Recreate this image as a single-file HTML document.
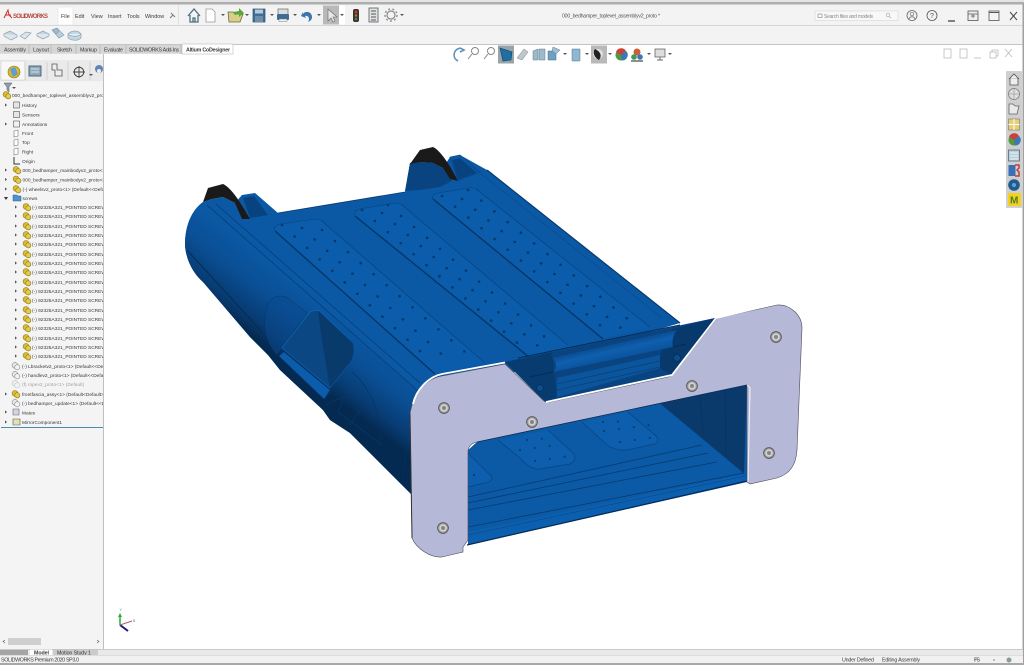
<!DOCTYPE html>
<html lang="en"><head><meta charset="utf-8"><title>SOLIDWORKS</title>
<style>html,body{margin:0;padding:0;background:#fff;overflow:hidden}svg{display:block}text{font-family:"Liberation Sans",sans-serif;fill:#3a3a3a}</style></head>
<body>
<svg width="1024" height="665" viewBox="0 0 1024 665" xmlns="http://www.w3.org/2000/svg">
<defs>
<linearGradient id="side" gradientUnits="userSpaceOnUse" x1="300" y1="285" x2="258" y2="340"><stop offset="0" stop-color="#0b58a3"/><stop offset=".4" stop-color="#0a4f95"/><stop offset=".78" stop-color="#083c73"/><stop offset="1" stop-color="#052a52"/></linearGradient>
<linearGradient id="bar" gradientUnits="userSpaceOnUse" x1="610" y1="340" x2="615" y2="362"><stop offset="0" stop-color="#0a3f78"/><stop offset=".5" stop-color="#0e60b0"/><stop offset="1" stop-color="#0b4f95"/></linearGradient>
<clipPath id="pc"><rect x="0" y="88" width="103" height="340"/></clipPath>
<g id="c"><circle cx="-1" cy="-.6" r="2.9" fill="#dcbc2e" stroke="#8a7a20" stroke-width=".6"/><circle cx="1.3" cy="1.3" r="2.6" fill="#e5cb4a" stroke="#8a7a20" stroke-width=".6"/></g>
<g id="g"><circle cx="-1" cy="-.6" r="2.9" fill="#e8e8e8" stroke="#666" stroke-width=".5"/><circle cx="1.3" cy="1.3" r="2.6" fill="#f3f3f3" stroke="#666" stroke-width=".5"/></g>
<path id="a" d="M-1,-1.6 L1,0 L-1,1.6Z" fill="#555"/>
<g id="s"><circle r="5.400" fill="#9a9a9a" stroke="#4a4a4a" stroke-width=".7"/><circle r="3.800" fill="#d2d2d2"/><circle r="2" fill="#858585"/></g>
<path id="d" d="M0,0 l2,2 l2,-2 z" fill="#555"/>
</defs>

<!-- chrome -->
<rect x="0" y="0" width="1024" height="2" fill="#e4e4e4"/>
<rect x="0" y="2" width="1024" height="2.500" fill="#aeaeae"/>
<rect x="0" y="4.500" width="1024" height="40" fill="#f3f3f3"/>
<rect x="0" y="25" width="1024" height=".8" fill="#d0d0d0"/>
<rect x="0" y="44" width="1024" height=".8" fill="#b5b5b5"/>
<rect x="1022.500" y="4" width="1.500" height="661" fill="#a0a0a0"/>

<!-- logo + menu -->
<path d="M4,18 L8,10 L9,15 L12,18 M5,15 L11,15" fill="none" stroke="#c8322a" stroke-width="1"/>
<text x="13" y="18" font-size="6" font-weight="700" style="fill:#b44a42" textLength="35">SOLIDWORKS</text>
<rect x="58" y="7" width="15" height="18" fill="#fff" stroke="#ddd" stroke-width=".5"/>
<g font-size="5.400"><text x="61" y="18">File</text><text x="75" y="18">Edit</text><text x="91" y="18">View</text><text x="108" y="18">Insert</text><text x="127" y="18">Tools</text><text x="145" y="18">Window</text></g>
<path d="M170,18 L173,15 M171,13 L175,17" stroke="#777" stroke-width="1"/>
<rect x="178" y="5" width=".8" height="20" fill="#ddd"/>

<!-- quick toolbar -->
<path d="M188,16 L194,9 L200,16 M190,15 V22 H198 V15 M193,22 V18 H195 V22" fill="#f5f5f5" stroke="#4c6f7f" stroke-width="1.300"/>
<path d="M206,9 H212 L215,12 V22 H206Z" fill="#fff" stroke="#999" stroke-width=".8"/>
<use href="#d" x="221" y="14"/>
<path d="M228,12 H233 L235,14 H243 L240,22 H229Z" fill="#d9cf8c" stroke="#6b6b3a" stroke-width=".8"/>
<path d="M233,12 L239,11 V8 L244,13 L239,17 V14 L235,15Z" fill="#58a83a"/>
<use href="#d" x="245" y="14"/>
<rect x="253" y="9" width="12" height="13" fill="#3f6f98" stroke="#2c4f70" stroke-width=".7"/><rect x="255" y="9.500" width="8" height="4" fill="#b5cbdc"/><rect x="255" y="16" width="8" height="6" fill="#6d8faa"/>
<use href="#d" x="270" y="14"/>
<rect x="278" y="9" width="10" height="6" fill="#ddd" stroke="#666" stroke-width=".7"/><rect x="277" y="14" width="12" height="6" rx="1" fill="#3b6d96"/><rect x="279" y="19" width="8" height="2.500" fill="#eee" stroke="#666" stroke-width=".4"/>
<use href="#d" x="293" y="14"/>
<path d="M303,14 C306,10 312,12 312,17 C312,20 310,21 308,22 C310,19 309,15 305,16 L306,18 L301,16 L303,12Z" fill="#3d76a8"/>
<use href="#d" x="317" y="14"/>
<rect x="323" y="5.500" width="16" height="19" fill="#b9b9b9"/>
<path d="M328,9 L328,21 L331,18 L333,22 L335,21 L333,17 L337,17Z" fill="#e6e6e6" stroke="#666" stroke-width=".6"/>
<rect x="339" y="5.500" width="6" height="19" fill="#fff"/><use href="#d" x="340" y="14"/>
<rect x="353" y="9" width="6" height="13" rx="2" fill="#333"/><circle cx="356" cy="12" r="1.500" fill="#c33"/><circle cx="356" cy="15.500" r="1.300" fill="#a87a20"/><circle cx="356" cy="19" r="1.300" fill="#4a8a3a"/>
<rect x="369" y="8" width="9" height="14" fill="#dfe5dd" stroke="#556" stroke-width=".8"/><path d="M371,11 H376 M371,14 H376 M371,17 H376 M371,20 H376" stroke="#556" stroke-width=".9"/>
<circle cx="391" cy="15" r="4" fill="none" stroke="#888" stroke-width="1.200"/><circle cx="391" cy="15" r="6" fill="none" stroke="#999" stroke-width="1.600" stroke-dasharray="2 2.200"/>
<use href="#d" x="400" y="14"/>

<!-- title + search + window controls -->
<text x="562" y="17.500" font-size="5.200" textLength="98" style="fill:#555">000_bedhamper_toplevel_assemblyv2_proto *</text>
<rect x="815" y="11" width="83" height="9.500" fill="#f8f8f8" stroke="#d5d5d5" stroke-width=".6"/>
<rect x="818" y="14" width="4" height="3.500" fill="none" stroke="#888" stroke-width=".6"/>
<text x="824" y="17.800" font-size="5" textLength="49" style="fill:#888">Search files and models</text>
<circle cx="888" cy="15" r="1.800" fill="none" stroke="#aaa" stroke-width=".7"/><path d="M889,16.500 L891,18" stroke="#aaa" stroke-width=".7"/>
<circle cx="912" cy="15.500" r="5" fill="none" stroke="#666" stroke-width=".8"/><circle cx="912" cy="14" r="1.800" fill="none" stroke="#666" stroke-width=".7"/><path d="M909,19 C910,16 914,16 915,19" fill="none" stroke="#666" stroke-width=".7"/>
<circle cx="932" cy="15.500" r="5" fill="none" stroke="#555" stroke-width=".8"/><text x="930" y="18" font-size="7" style="fill:#555">?</text>
<path d="M948,21 H955" stroke="#444" stroke-width="1.300"/>
<rect x="968" y="11" width="10" height="9.500" fill="#eee" stroke="#555" stroke-width=".8"/><path d="M968,14 H978 M973,14 V18 M971,16 H975" stroke="#555" stroke-width=".7"/>
<rect x="989" y="11" width="10" height="9.500" fill="none" stroke="#555" stroke-width=".8"/><path d="M989,12.500 H999" stroke="#555" stroke-width="1"/>
<path d="M1010,12 L1017,20 M1017,12 L1010,20" stroke="#444" stroke-width="1"/>

<!-- second row icons -->
<g stroke="#8ba3b5" stroke-width=".7">
<path d="M4,34 L10,31 L17,35 L11,38Z" fill="#c5d5df"/><path d="M4,34 V36 L11,40 L17,37 V35" fill="#dfe6eb"/>
<path d="M20,36 L26,32 L31,33 L25,39Z" fill="#dde4ea"/>
<path d="M37,34 L43,31 L49,34 L43,38Z" fill="#c5d5df"/><path d="M37,34 V36 L43,39 L49,36 V34" fill="#dfe6eb"/>
<path d="M52,30 L57,28 L64,35 L59,38Z" fill="#b5cddc"/><circle cx="56" cy="31" r="2.500" fill="#9dbacd"/>
<path d="M68,34 C72,30 78,30 81,34 V38 C78,41 72,41 68,38Z" fill="#c2d7e3"/><path d="M68,34 C72,37 78,37 81,34" fill="#e9f0f4"/>
</g>

<!-- command tabs -->
<rect x="0" y="44.800" width="182" height="9" fill="#d6d6d6"/>
<rect x="182" y="44" width="51" height="10" fill="#fff" stroke="#bbb" stroke-width=".6"/>
<path d="M29,45 V54 M51,45 V54 M76,45 V54 M100,45 V54 M126,45 V54 M181,45 V54" stroke="#aaa" stroke-width=".6"/>
<g font-size="5.300"><text x="4" y="51.500" textLength="22">Assembly</text><text x="33" y="51.500" textLength="16">Layout</text><text x="57" y="51.500" textLength="15">Sketch</text><text x="80" y="51.500" textLength="17">Markup</text><text x="104" y="51.500" textLength="19">Evaluate</text><text x="129" y="51.500" textLength="50">SOLIDWORKS Add-Ins</text><text x="186" y="51.500" textLength="44" font-weight="700">Altium CoDesigner</text></g>

<!-- left panel -->
<rect x="0" y="54" width="103" height="595" fill="#f4f4f4"/>
<rect x="103" y="54" width=".9" height="595" fill="#b8b8b8"/>
<rect x="0" y="60" width="103" height="20" fill="#eaeaea"/>
<rect x="1" y="61" width="24" height="19" fill="#f8f8f8" stroke="#ccc" stroke-width=".5"/>
<path d="M25,62 V80 M47,62 V80 M68,62 V80 M90,62 V80" stroke="#c4c4c4" stroke-width=".6"/>
<circle cx="14" cy="72" r="6" fill="#dcb52a" stroke="#8a7a20" stroke-width=".6"/><path d="M10,69 L15,67 L18,74 L13,77Z" fill="#5f9ed0"/>
<rect x="29" y="66" width="12" height="10" fill="#8fa9b9" stroke="#3f5f70" stroke-width=".9"/><path d="M31,69 H39 M31,72 H39" stroke="#eef" stroke-width=".8"/>
<path d="M52,64 H57 V70 H62 V76 H55 V70 H52Z" fill="#eee" stroke="#555" stroke-width=".8"/>
<circle cx="79" cy="72" r="4.800" fill="none" stroke="#444" stroke-width="1"/><path d="M73,72 H85 M79,66 V78" stroke="#444" stroke-width=".9"/>
<use href="#d" x="89" y="74"/><circle cx="99" cy="69" r="4" fill="#5f85b5"/><circle cx="99" cy="71" r="2" fill="#eee"/>
<rect x="0" y="80.500" width="103" height=".6" fill="#ddd"/>
<path d="M4,83 H12 L9,87 V92 L7,90 V87Z" fill="#8fa0a8" stroke="#556" stroke-width=".5"/><use href="#d" x="12" y="87"/>

<!-- tree -->
<g clip-path="url(#pc)" font-size="4.800">
<use href="#c" x="7" y="95"/><text x="12" y="97">000_bedhamper_toplevel_assemblyv2_proto</text>
<use href="#a" x="6" y="105"/><rect x="13.500" y="102" width="6" height="6" fill="#e6e6e6" stroke="#555" stroke-width=".6"/><text x="22" y="107">History</text>
<rect x="13.500" y="111.500" width="6" height="6" fill="#e6e6e6" stroke="#555" stroke-width=".6"/><text x="22" y="116.500">Sensors</text>
<use href="#a" x="6" y="124"/><rect x="13.500" y="121" width="6" height="6" fill="#f2f2f2" stroke="#555" stroke-width=".6"/><text x="22" y="126">Annotations</text>
<path d="M14,131 L18,130 V136 L14,137Z M14,140 L18,139 V145 L14,146Z M14,149 L18,148 V154 L14,155Z" fill="#fff" stroke="#777" stroke-width=".6"/>
<text x="22" y="135">Front</text><text x="22" y="144">Top</text><text x="22" y="153.500">Right</text>
<path d="M14,157 V164 H20" fill="none" stroke="#333" stroke-width="1"/><text x="22" y="163">Origin</text>
<use href="#a" x="6" y="170"/><use href="#c" x="17" y="170"/><text x="22.500" y="172">000_bedhamper_mainbodyv2_proto&lt;1&gt;</text>
<use href="#a" x="6" y="179.500"/><use href="#c" x="17" y="179.500"/><text x="22.500" y="181.500">000_bedhamper_mainbodyv2_proto&lt;2&gt;</text>
<use href="#a" x="6" y="189"/><use href="#c" x="17" y="189"/><text x="22.500" y="191">(-) wheelsv2_proto&lt;1&gt; (Default&lt;&lt;Default&gt;</text>
<path d="M4,197 H8 L6,200Z" fill="#333"/><path d="M13,195 H17 L18,196 H21 V201 H13Z" fill="#4f93cc" stroke="#2c5f88" stroke-width=".5"/><text x="22.500" y="200">screws</text>
<use href="#a" x="16" y="207"/><use href="#c" x="27" y="207"/><text x="32" y="209">(-) 92325A321_POINTED SCREW&lt;1&gt;</text>
<use href="#a" x="16" y="216"/><use href="#c" x="27" y="216"/><text x="32" y="218">(-) 92325A321_POINTED SCREW&lt;2&gt;</text>
<use href="#a" x="16" y="226"/><use href="#c" x="27" y="226"/><text x="32" y="228">(-) 92325A321_POINTED SCREW&lt;3&gt;</text>
<use href="#a" x="16" y="235"/><use href="#c" x="27" y="235"/><text x="32" y="237">(-) 92325A321_POINTED SCREW&lt;4&gt;</text>
<use href="#a" x="16" y="244"/><use href="#c" x="27" y="244"/><text x="32" y="246">(-) 92325A321_POINTED SCREW&lt;5&gt;</text>
<use href="#a" x="16" y="254"/><use href="#c" x="27" y="254"/><text x="32" y="256">(-) 92325A321_POINTED SCREW&lt;6&gt;</text>
<use href="#a" x="16" y="263"/><use href="#c" x="27" y="263"/><text x="32" y="265">(-) 92325A321_POINTED SCREW&lt;7&gt;</text>
<use href="#a" x="16" y="272"/><use href="#c" x="27" y="272"/><text x="32" y="274">(-) 92325A321_POINTED SCREW&lt;8&gt;</text>
<use href="#a" x="16" y="282"/><use href="#c" x="27" y="282"/><text x="32" y="284">(-) 92325A321_POINTED SCREW&lt;9&gt;</text>
<use href="#a" x="16" y="291"/><use href="#c" x="27" y="291"/><text x="32" y="293">(-) 92325A321_POINTED SCREW&lt;10&gt;</text>
<use href="#a" x="16" y="300"/><use href="#c" x="27" y="300"/><text x="32" y="302">(-) 92325A321_POINTED SCREW&lt;11&gt;</text>
<use href="#a" x="16" y="310"/><use href="#c" x="27" y="310"/><text x="32" y="312">(-) 92325A321_POINTED SCREW&lt;12&gt;</text>
<use href="#a" x="16" y="319"/><use href="#c" x="27" y="319"/><text x="32" y="321">(-) 92325A321_POINTED SCREW&lt;13&gt;</text>
<use href="#a" x="16" y="328"/><use href="#c" x="27" y="328"/><text x="32" y="330">(-) 92325A321_POINTED SCREW&lt;14&gt;</text>
<use href="#a" x="16" y="338"/><use href="#c" x="27" y="338"/><text x="32" y="340">(-) 92325A321_POINTED SCREW&lt;15&gt;</text>
<use href="#a" x="16" y="347"/><use href="#c" x="27" y="347"/><text x="32" y="349">(-) 92325A321_POINTED SCREW&lt;16&gt;</text>
<use href="#a" x="16" y="356"/><use href="#c" x="27" y="356"/><text x="32" y="358">(-) 92325A321_POINTED SCREW&lt;17&gt;</text>
<use href="#g" x="16" y="366"/><text x="22" y="368">(-) Lbracketv2_proto&lt;1&gt; (Default&lt;&lt;Default&gt;</text>
<use href="#g" x="16" y="375"/><text x="22" y="377">(-) handlev2_proto&lt;1&gt; (Default&lt;&lt;Default&gt;</text>
<g opacity=".45"><use href="#g" x="16" y="384"/><text x="22" y="386">(f) ropev2_proto&lt;1&gt; (Default)</text></g>
<use href="#a" x="6" y="394"/><use href="#c" x="16" y="394"/><text x="22" y="396">frontfascia_assy&lt;1&gt; (Default&lt;Default&gt;</text>
<use href="#g" x="16" y="403"/><text x="22" y="405">(-) bedhamper_update&lt;1&gt; (Default&lt;&lt;Default&gt;</text>
<use href="#a" x="6" y="412"/><path d="M13,409 H19 V415 H13Z" fill="#cfd8e0" stroke="#667" stroke-width=".6"/><text x="22" y="414.500">Mates</text>
<use href="#a" x="6" y="422"/><path d="M13,419 H20 V425 H13Z" fill="#e6dfb0" stroke="#555" stroke-width=".6"/><text x="22" y="424">MirrorComponent1</text>
</g>
<rect x="1" y="427" width="102" height=".9" fill="#3c7fa8"/>
<!-- panel scrollbar -->
<rect x="8" y="638" width="33" height="7" fill="#cfcfcf"/>
<path d="M5,640 L3,641.500 L5,643 M97,640 L99,641.500 L97,643" fill="none" stroke="#666" stroke-width=".7"/>

<!-- body -->
<path d="M203,202 C192,210 185,225 185,245 C186,262 195,275 203,282 L250,337 L268,355 L280,370 L323,410 L330,420 L350,433 L412,495 L420,400 L680,323 L487,170 L460,155 L450,157 L443,168 L433,163 L420,162 L410,163 L405,192 L278,213 L255,193 L242,195 L235,203 L223,197 L212,199 Z" fill="#0b59a5"/>
<path d="M203,202 C192,210 185,225 185,245 C186,262 195,275 203,282 L250,337 L268,355 L280,370 L323,410 L330,420 L350,433 L412,495 L418,392 L230,222 L212,202 Z" fill="url(#side)"/>
<path d="M187,250 L263,333" stroke="#052c55" stroke-width="1" fill="none"/>
<path d="M207,205 L417,390 M216,204 L420,383" stroke="#083a70" stroke-width=".7" fill="none"/>
<path d="M487,170 L680,323" stroke="#083a70" stroke-width="1.200" fill="none"/>
<path d="M470,165 L662,318" stroke="#0a4a8a" stroke-width=".6" fill="none"/>
<path d="M278,213 L405,192" stroke="#0a3a70" stroke-width=".8" fill="none"/>

<!-- wheel recesses + wheels -->
<path d="M405,191 L410,163 L420,162 L433,163 L443,168 L452,181 L440,187 L420,190Z" fill="#0a4480"/>
<path d="M410,164 L420,150 L433,147 C440,150 450,165 458,181 L450,179 L443,168 L433,163 L420,162Z" fill="#1a1a1a"/>
<path d="M452,160 L460,158 L477,173 L458,180Z" fill="#09437f"/>
<path d="M450,157 L460,155 L480,172 L458,181Z" fill="none" stroke="#0a4a8a" stroke-width=".6"/>
<path d="M203,202 L208,188 L223,184 C232,188 242,205 250,219 L242,219 L235,203 L223,197 L212,199Z" fill="#1a1a1a"/>
<path d="M243,198 L254,196 L268,215 L250,218Z" fill="#09437f"/>

<!-- pads -->
<g fill="#0b5cab" stroke="none">
<path d="M275,230 Q273,226 280,224 L315,219 Q320,219 324,222 L485,363 L435,374Z"/>
<path d="M355,215 Q353,211 360,209 L395,203 Q400,203 404,206 L568,345 L535,360Z"/>
<path d="M433,199 Q431,195 438,193 L468,188 Q474,187 478,190 L650,327 L603,338Z"/>
</g>
<g fill="none" stroke="#063563">
<path d="M275,231 L435,374 M355,216 L535,362 M433,199 L603,339" stroke-width="1.300"/>
<path d="M322,221 L485,363 M402,205 L568,345 M476,189 L650,327" stroke-width=".7" stroke="#08427f"/>
<path d="M275,230 Q273,226 280,224 L315,219 Q320,219 324,222 M355,215 Q353,211 360,209 L395,203 Q400,203 404,206 M433,199 Q431,195 438,193 L468,188 Q474,187 478,190" stroke-width=".6" stroke="#08427f"/>
</g>
<g fill="none" stroke="#0a3866" stroke-width="2.600" stroke-linecap="round" stroke-dasharray="0 17">
<path d="M282,225 L432,362"/><path d="M302,228 L450,362"/><path d="M322,230 L472,358"/>
<path d="M362,210 L522,347"/><path d="M382,213 L545,352"/><path d="M388,205 L552,343"/>
<path d="M442,196 L606,330"/><path d="M462,199 L627,333"/><path d="M468,190 L634,324"/>
</g>

<!-- side handle recess -->
<path d="M266,312 C266,300 277,292 288,298 L307,313 L282,348 L277,355 C268,345 262,330 266,312Z" fill="#0a4a8d" fill-opacity=".5" stroke="#063563" stroke-width=".5"/>
<path d="M282,348 L310,312 Q316,309 320,311 L353,343 Q355,352 352,360 L330,388Z" fill="#0a4783" stroke="#0c63b4" stroke-width=".8"/>
<path d="M318,311 L353,343 Q355,352 352,360 L330,388 L322,340Z" fill="#083a6c"/>
<path d="M279,356 L284,352 L330,390 L324,399Z" fill="#0b5cab" stroke="#0a3f78" stroke-width=".5"/>
<path d="M325,405 L345,396 L365,402 M345,396 L338,412 L382,445 M365,395 L365,402 L350,425 M324,400 C328,392 338,386 345,380" fill="none" stroke="#083a6e" stroke-width=".6"/>
<path d="M352,372 C368,385 380,410 381,440 M408,440 L402,478" fill="none" stroke="#07325f" stroke-width=".6"/>

<!-- notch -->
<path d="M505,362 L715,318 L672,376 L545,402Z" fill="#0a4480"/>
<path d="M505,362 L552,352 L557,397 L545,402Z" fill="#083c70"/>
<path d="M672,329 L715,318 L688,355 L672,376 L660,368 L660,355Z" fill="#08396c"/>
<path d="M518,358 L680,325" stroke="#052c55" stroke-width="1"/>
<path d="M557,378 L660,355 V368 L557,397Z" fill="#0b559d"/>
<path d="M557,384 L660,361 M557,390 L660,367" stroke="#083a70" stroke-width=".6"/>
<path d="M552,358 L677,330 C672,335 672,345 673,347 L553,372 C558,368 556,360 552,358Z" fill="url(#bar)"/>
<path d="M530,377 L553,372 M673,347 L686,344" stroke="#052c55" stroke-width="1"/>
<circle cx="540" cy="388" r="3.500" fill="#0b4c8e" stroke="#052c55" stroke-width=".7"/>
<circle cx="677" cy="358" r="3.500" fill="#0b4c8e" stroke="#052c55" stroke-width=".7"/>

<!-- window interior -->
<path d="M468,450 L477,442 L747,385 L747,482 L468,545Z" fill="#0c5aa6"/>
<path d="M660,403 L747,385 L744,473Z" fill="#0a3a6c"/>
<path d="M700,394 L703,434 M725,390 L726,456" stroke="#07325f" stroke-width=".7"/>
<g fill="#0d5fae" stroke="#08427f" stroke-width=".7">
<path d="M468,453 L492,477 Q492,482 485,483 L468,487"/>
<path d="M498,440 L520,458 Q530,470 540,469 L570,464 Q577,460 574,454 L548,430"/>
<path d="M582,422 L607,445 Q615,451 627,450 L655,444 Q660,441 656,436 L628,412"/>
</g>
<g fill="none" stroke="#083e74" stroke-width="2.200" stroke-linecap="round" stroke-dasharray="0 15">
<path d="M474,475 L486,474"/><path d="M520,450 L563,444"/><path d="M535,461 L570,456"/><path d="M527,440 L550,438"/>
<path d="M603,422 L632,421"/><path d="M604,431 L650,425"/><path d="M620,442 L650,438"/>
</g>
<g fill="none" stroke="#073a6e" stroke-width=".8">
<path d="M468,497 L702,445 M468,503 L708,453 M468,510 L717,462 M468,527 L744,473"/>
<path d="M660,403 L744,473"/>
</g>
<path d="M468,532 L744,474 L747,481 L468,544Z" fill="#0c5fae"/>
<path d="M468,535 L745,476" stroke="#0a4483" stroke-width=".5"/>
<path d="M467,545 L747,481" stroke="#052c55" stroke-width="1.200"/>

<!-- plate -->
<path d="M412,405 C414,392 428,378 442,376 L505,364 L543,400 Q546,403 550,402 L668,377 Q671,376 674,373 L717,318 L777,305 C790,304 802,315 802,328 L797,450 C796,465 790,474 777,478 L750,484 L747,482 L747,385 L477,442 Q468,444 468,452 L468,540 L463,547 L463,552 L442,557 C430,558 416,548 412,538 L410,413Z" fill="#b5b8d6" stroke="#4a4a5a" stroke-width=".6"/>
<path d="M413,404 C416,390 428,377 442,374 L505,362.500 M546,402 L672,375 L716,318 L777,303.500" fill="none" stroke="#fff" stroke-width="1.800"/>
<path d="M410,413 L412,538" stroke="#333" stroke-width="1"/>
<path d="M747,385 L750,388 L748,482" fill="none" stroke="#eceef5" stroke-width="1.200"/>
<path d="M477,442 L747,385" stroke="#052c55" stroke-width=".7"/>
<use href="#s" x="444" y="408"/><use href="#s" x="532" y="422"/><use href="#s" x="692" y="386"/><use href="#s" x="776" y="337"/><use href="#s" x="769" y="453"/><use href="#s" x="443" y="528"/>

<!-- heads-up toolbar -->
<rect x="498" y="45.500" width="16" height="18" fill="#9aa3aa"/>
<rect x="591" y="45.500" width="16" height="18" fill="#b9b9b9"/>
<path d="M460,48 C453,50 452,58 458,61 M460,48 L464,50 L460,52" fill="none" stroke="#5b93bb" stroke-width="1.600"/>
<g fill="none" stroke="#888" stroke-width="1"><circle cx="475" cy="51" r="3.500"/><path d="M472,54 L468,59"/><circle cx="491" cy="51" r="3.500"/><path d="M488,54 L484,59"/></g>
<path d="M500,48 L512,52 L511,60 L503,61Z" fill="#1f6fa3" stroke="#0d4468" stroke-width=".6"/>
<path d="M517,58 L524,49 L528,52 L522,60Z" fill="#bcc6cc" stroke="#7a8790" stroke-width=".5"/>
<path d="M533,51 L538,49 V60 L533,60Z M539,49 L545,49 V60 L539,60Z" fill="#9db9ca" stroke="#5b7d92" stroke-width=".5"/>
<path d="M548,51 H556 V60 H548Z" fill="#6fa0c2" stroke="#3f6a88" stroke-width=".5"/><path d="M553,47 L560,50 L556,54 L552,51Z" fill="#9dc0d6" stroke="#3f6a88" stroke-width=".4"/>
<use href="#d" x="563" y="53"/>
<path d="M572,49 L580,49 V61 L572,61Z" fill="#8fb7cf" stroke="#4f7a94" stroke-width=".5"/><use href="#d" x="585" y="53"/>
<circle cx="598" cy="54" r="5" fill="#e0e0e0"/><path d="M595,49 C592,53 595,58 599,60 C602,56 601,52 595,49Z" fill="#222"/><use href="#d" x="608" y="53"/>
<circle cx="621" cy="55" r="5.500" fill="#4d9a3f"/><path d="M621,55 L616,52 A5.500,5.500 0 0,1 626,51Z" fill="#c9423a"/><path d="M621,55 L626,51 A5.500,5.500 0 0,1 622,60.500Z" fill="#3e77b5"/>
<circle cx="637" cy="52" r="3.500" fill="#c9603a"/><circle cx="634" cy="57" r="2.800" fill="#3e9a55"/><circle cx="640" cy="57" r="2.800" fill="#3e77b5"/><path d="M631,61 H643" stroke="#444" stroke-width="1.200"/><use href="#d" x="647" y="53"/>
<rect x="655" y="49" width="10" height="8" fill="#ddd" stroke="#666" stroke-width=".8"/><path d="M660,57 V60 M657,60 H663" stroke="#666" stroke-width=".9"/><use href="#d" x="668" y="53"/>
<g fill="none" stroke="#bbb" stroke-width=".8"><rect x="944" y="49" width="7" height="9"/><rect x="960" y="49" width="7" height="9"/><path d="M974,58 H981"/><rect x="990" y="52" width="6" height="6"/><path d="M992,52 V50 H998 V56 H996"/><path d="M1005,49 L1012,57 M1012,49 L1005,57"/></g>

<!-- task pane -->
<rect x="1006.500" y="71.500" width="15" height="136" fill="#cfcfcf" stroke="#bbb" stroke-width=".5"/>
<path d="M1009,79 L1014,74 L1019,79 M1010,78 V85 H1018 V78" fill="#eee" stroke="#555" stroke-width=".8"/>
<circle cx="1014" cy="94" r="5.500" fill="#ddd" stroke="#777" stroke-width=".7"/><path d="M1014,88.500 V99.500 M1008.500,94 H1019.500" stroke="#888" stroke-width=".5"/>
<path d="M1009,104 H1013 L1015,106 H1019 L1017,114 H1009Z" fill="#e9e9e9" stroke="#666" stroke-width=".8"/>
<rect x="1008.500" y="119" width="11" height="11" fill="#e6cf70" stroke="#667" stroke-width=".5"/><path d="M1014,119 V130 M1008.500,124.500 H1019.500" stroke="#fff" stroke-width="1"/>
<circle cx="1014" cy="140" r="5.500" fill="#4d9a3f"/><path d="M1014,140 L1009,137 A5.500,5.500 0 0,1 1019,136Z" fill="#c9423a"/><path d="M1014,140 L1019,136 A5.500,5.500 0 0,1 1015,145.500Z" fill="#3e77b5"/>
<rect x="1008.500" y="150" width="11" height="11" fill="#b9cfdb" stroke="#3f5f70" stroke-width=".7"/><path d="M1010,153 H1018 M1010,156 H1018 M1010,159 H1018" stroke="#fff" stroke-width=".8"/>
<rect x="1008.500" y="165" width="7" height="11" fill="#3a6fb5"/><path d="M1015,165 H1019 V168 L1017,170 L1019,172 V176 H1015" fill="none" stroke="#c43a3a" stroke-width="1.500"/>
<circle cx="1014" cy="185" r="5.800" fill="#1f5a90"/><circle cx="1014" cy="185" r="2" fill="#6fa0c8"/>
<rect x="1008" y="193" width="13" height="13" fill="#f2d21f"/><text x="1010" y="203.500" font-size="10" font-weight="700" style="fill:#4f7a28">M</text>

<!-- triad -->
<path d="M120,625 V615" stroke="#2fa83a" stroke-width="1.500"/><path d="M118,617 L120,613 L122,617Z" fill="#2fa83a"/>
<path d="M120,625 L128,631" stroke="#1c1c80" stroke-width="2"/>
<path d="M120,625 L132,621" stroke="#b06060" stroke-width="1"/>
<text x="119.500" y="611" font-size="3.500" style="fill:#3a8a4a">Y</text><text x="133" y="622" font-size="3.500">X</text>

<!-- bottom tabs + status -->
<rect x="0" y="649" width="1023" height="6" fill="#e9e9e9"/>
<rect x="0" y="649" width="1023" height=".7" fill="#bdbdbd"/>
<rect x="0" y="650" width="28" height="5" fill="#a5a5a5"/>
<rect x="30" y="649.500" width="22" height="6" fill="#fff"/>
<rect x="53" y="649.500" width="45" height="6" fill="#cbcbcb"/>
<text x="34" y="654.500" font-size="5.300" font-weight="700" textLength="15">Model</text>
<text x="57" y="654.500" font-size="5.300" textLength="34">Motion Study 1</text>
<rect x="0" y="655" width="1023" height="8" fill="#f1f1f1"/>
<rect x="0" y="655" width="1023" height=".6" fill="#cfcfcf"/>
<rect x="0" y="663" width="1024" height="2" fill="#a8a8a8"/>
<text x="1" y="661.500" font-size="5.300" textLength="78">SOLIDWORKS Premium 2020 SP3.0</text>
<text x="842" y="661.500" font-size="5.300" textLength="32">Under Defined</text>
<text x="882" y="661.500" font-size="5.300" textLength="38">Editing Assembly</text>
<text x="974" y="661.500" font-size="5.300" textLength="6">IPS</text>
<path d="M993,660 H995" stroke="#555" stroke-width=".7"/>
<circle cx="1009" cy="660" r="2.500" fill="#8a9a9a"/>
</svg>
</body></html>
